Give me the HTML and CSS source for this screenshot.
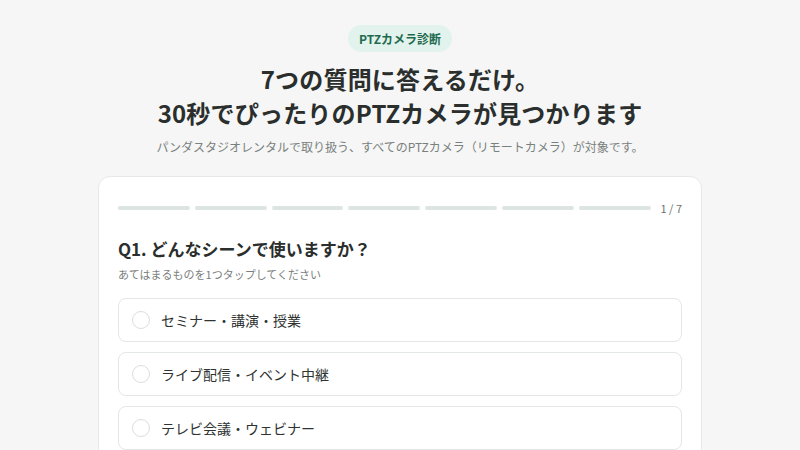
FILE: index.html
```html
<!DOCTYPE html>
<html lang="ja">
<head>
<meta charset="utf-8">
<link rel="stylesheet" href="styles.css">
</head>
<body>
<main class="page">
  <header class="hero">
    <span class="badge">PTZカメラ診断</span>
    <h1 class="title">7つの質問に答えるだけ。<br>30秒でぴったりのPTZカメラが見つかります</h1>
    <p class="lead">パンダスタジオレンタルで取り扱う、すべてのPTZカメラ（リモートカメラ）が対象です。</p>
  </header>
  <section class="card">
    <div class="progress">
      <div class="bars">
        <span class="bar"></span><span class="bar"></span><span class="bar"></span><span class="bar"></span><span class="bar"></span><span class="bar"></span><span class="bar"></span>
      </div>
      <span class="count">1 / 7</span>
    </div>
    <h2 class="question">Q1. どんなシーンで使いますか？</h2>
    <p class="hint">あてはまるものを1つタップしてください</p>
    <ul class="options">
      <li class="option"><span class="radio"></span>セミナー・講演・授業</li>
      <li class="option"><span class="radio"></span>ライブ配信・イベント中継</li>
      <li class="option"><span class="radio"></span>テレビ会議・ウェビナー</li>
    </ul>
  </section>
</main>
</body>
</html>
```
FILE: styles.css
```css
* { box-sizing: border-box; }
html, body { margin: 0; padding: 0; }
body {
  background: #f5f6f5;
  font-family: "Noto Sans CJK JP", "Noto Sans", sans-serif;
  color: #2b2f2d;
  overflow: hidden;
}
.page {
  width: 604px;
  margin: 0 auto;
  display: flex;
  flex-direction: column;
  align-items: stretch;
}
.hero {
  display: flex;
  flex-direction: column;
  align-items: center;
  padding-top: 25px;
}
.badge {
  display: inline-block;
  background: #e1f3ec;
  color: #1f6a4f;
  font-size: 12px;
  font-weight: 700;
  line-height: 27px;
  height: 27px;
  padding: 0 11px;
  border-radius: 14px;
}
.title {
  margin: 10px 0 0;
  font-size: 24px;
  font-weight: 700;
  line-height: 34px;
  text-align: center;
  color: #2a2e2c;
  letter-spacing: 0.2px;
}
.lead {
  margin: 8px 0 0;
  font-size: 12px;
  line-height: 18px;
  color: #7a807d;
}
.card {
  margin-top: 20px;
  background: #fff;
  border: 1px solid #e6e9e7;
  border-radius: 12px;
  padding: 23px 19px 20px;
}
.progress {
  display: flex;
  align-items: center;
  gap: 10px;
}
.bars {
  flex: 1;
  display: flex;
  gap: 5px;
}
.bar {
  flex: 1;
  height: 4px;
  border-radius: 2px;
  background: #dde5e2;
}
.count {
  font-size: 11px;
  color: #6d7370;
  line-height: 16px;
  white-space: nowrap;
}
.question {
  margin: 20px 0 0;
  font-size: 17px;
  font-weight: 700;
  line-height: 26px;
  color: #2a2e2c;
}
.hint {
  margin: 4px 0 0;
  font-size: 11px;
  line-height: 16px;
  color: #7a807d;
}
.options {
  list-style: none;
  margin: 16px 0 0;
  padding: 0;
  display: flex;
  flex-direction: column;
  gap: 10px;
}
.option {
  display: flex;
  align-items: center;
  height: 44px;
  border: 1.5px solid #e3e7e5;
  border-radius: 8px;
  padding: 0 13px;
  font-size: 14px;
  color: #2f3331;
}
.radio {
  width: 18px;
  height: 18px;
  border: 1.5px solid #d9dfdc;
  border-radius: 50%;
  margin-right: 11px;
  flex: none;
}
```
